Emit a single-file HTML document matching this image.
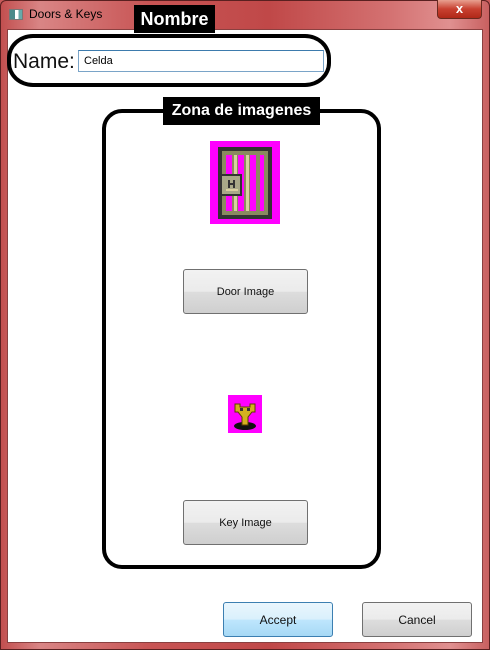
<!DOCTYPE html>
<html><head><style>
*{margin:0;padding:0;box-sizing:border-box}
body{width:490px;height:650px;overflow:hidden;font-family:"Liberation Sans",sans-serif;position:relative;background:#c85a5a}
.frame{position:absolute;left:0;top:0;width:490px;height:650px;background:linear-gradient(90deg,#c24f4f 0%,#d98585 8%,#c85555 30%,#c04848 55%,#d47272 80%,#e09090 92%,#c86060 100%);border:1px solid #5a2020;border-radius:6px 6px 0 0}
.client{position:absolute;left:7px;top:29px;width:476px;height:614px;background:#fff;border:1px solid #8a4040}
.abs{position:absolute}
.btn{position:absolute;border:1px solid #707070;border-radius:3px;background:linear-gradient(#f2f2f2 0%,#ebebeb 50%,#dddddd 51%,#cfcfcf 100%);font-size:11px;color:#111;display:flex;align-items:center;justify-content:center}
.lbl{position:absolute;background:#000;color:#fff;font-weight:bold;font-size:18px;display:flex;align-items:center;justify-content:center;white-space:nowrap}
</style></head><body>
<div class="frame"></div>
<div class="abs" style="left:9px;top:9px;width:14px;height:11px;background:linear-gradient(90deg,#4a8a8a 40%,#fff 40%,#fff 70%,#6aa 70%);border:1px solid #777"></div>
<div class="abs" style="left:29px;top:7px;font-size:12px;color:#000">Doors &amp; Keys</div>
<div class="abs" style="left:437px;top:0;width:45px;height:19px;background:linear-gradient(#e8a090,#c84030 50%,#b02818);border:1px solid #6a2a20;border-top:none;border-radius:0 0 4px 4px;color:#fff;font-weight:bold;font-size:13px;text-align:center;line-height:17px">x</div>
<div class="client"></div>
<div class="abs" style="left:7px;top:34px;width:324px;height:53px;border:4px solid #000;border-radius:26px/24px"></div>
<div class="lbl" style="left:134px;top:5px;width:81px;height:28px">Nombre</div>
<div class="abs" style="left:13px;top:50px;font-size:21px;color:#111">Name:</div>
<div class="abs" style="left:78px;top:50px;width:246px;height:22px;border:1px solid #7aa4c8;border-top-color:#3d7bad;font-size:11px;padding:4px 5px;color:#000">Celda</div>
<div class="abs" style="left:102px;top:109px;width:279px;height:460px;border:4px solid #000;border-radius:20px"></div>
<div class="lbl" style="left:163px;top:97px;width:157px;height:28px;font-size:16px">Zona de imagenes</div>
<svg class="abs" style="left:210px;top:141px" width="70" height="83" viewBox="0 0 70 83">
<rect width="70" height="83" fill="#f0f"/>
<rect x="8" y="6" width="54" height="72" fill="#333"/>
<rect x="12" y="10" width="46" height="64" fill="#8a8a60"/>
<rect x="16" y="14" width="6" height="56" fill="#f0f"/><rect x="28" y="14" width="6" height="56" fill="#f0f"/><rect x="40" y="14" width="6" height="56" fill="#f0f"/><rect x="50" y="14" width="4" height="56" fill="#f0f"/>
<rect x="24" y="14" width="3" height="56" fill="#d8d0a0"/><rect x="36" y="14" width="3" height="56" fill="#d8d0a0"/>
<rect x="10" y="33" width="22" height="22" fill="#333"/><rect x="12" y="35" width="18" height="18" fill="#a8a888"/>
<rect x="18" y="39" width="2" height="8" fill="#333"/><rect x="23" y="39" width="2" height="8" fill="#333"/><rect x="18" y="42" width="7" height="2" fill="#333"/><rect x="16" y="48" width="12" height="2" fill="#d8d0a0"/>
</svg>
<div class="btn" style="left:183px;top:269px;width:125px;height:45px">Door Image</div>
<svg class="abs" style="left:228px;top:395px" width="34" height="38" viewBox="0 0 34 38">
<rect width="34" height="38" fill="#f0f"/>
<ellipse cx="17" cy="31" rx="11" ry="4" fill="#111"/>
<path d="M7 9h5v3h10v-3h5v8h-3l-4 5v8h-6v-8l-4-5h-3z" fill="#d4b020" stroke="#5a4000" stroke-width="1"/>
<rect x="12" y="13" width="3" height="3" fill="#333"/><rect x="19" y="13" width="3" height="3" fill="#333"/>
</svg>
<div class="btn" style="left:183px;top:500px;width:125px;height:45px">Key Image</div>
<div class="btn" style="left:223px;top:602px;width:110px;height:35px;border-color:#3c7fb1;background:linear-gradient(#eaf6fd 0%,#d9f0fc 50%,#bee6fd 51%,#a7d9f5 100%);font-size:12px">Accept</div>
<div class="btn" style="left:362px;top:602px;width:110px;height:35px;font-size:12px">Cancel</div>
</body></html>
